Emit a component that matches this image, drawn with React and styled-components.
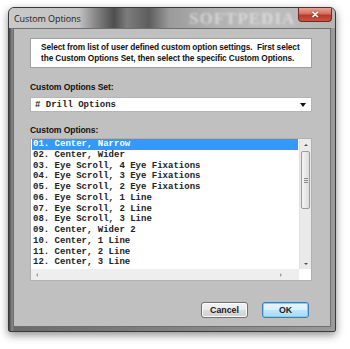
import styled, { createGlobalStyle } from 'styled-components';

const GlobalStyle = createGlobalStyle`
  html, body {
    margin: 0;
    padding: 0;
    background: #ffffff;
  }
  body {
    font-family: "Liberation Sans", Arial, sans-serif;
  }
`;

const options = [
  '01. Center, Narrow',
  '02. Center, Wider',
  '03. Eye Scroll, 4 Eye Fixations',
  '04. Eye Scroll, 3 Eye Fixations',
  '05. Eye Scroll, 2 Eye Fixations',
  '06. Eye Scroll, 1 Line',
  '07. Eye Scroll, 2 Line',
  '08. Eye Scroll, 3 Line',
  '09. Center, Wider 2',
  '10. Center, 1 Line',
  '11. Center, 2 Line',
  '12. Center, 3 Line',
];

const Page = styled.div`
  padding: 7px 0 0 8px;
  height: 349px;
  box-sizing: border-box;
`;

const Window = styled.div`
  width: 328px;
  height: 325px;
  box-sizing: border-box;
  display: flex;
  flex-direction: column;
  border: 1px solid #3a3a3a;
  border-radius: 6px 6px 2px 2px;
  background: linear-gradient(90deg, #3f3f3f 0px, #8a8a8a 3px, #6a6a6a 5px, #9a9a9a 100%);
  box-shadow: 0 3px 9px rgba(0, 0, 0, 0.45);
  overflow: hidden;
`;

const TitleBar = styled.div`
  position: relative;
  height: 20px;
  display: flex;
  align-items: center;
  padding-left: 5px;
  background: linear-gradient(90deg,
    #c9c9c9 0px, #c2c2c2 70px, #8c8c8c 85px, #4e4e4e 105px, #7d7d7d 118px,
    #5d5d5d 140px, #9a9a9a 160px, #b0b0b0 200px, #bdbdbd 260px, #b5b5b5 328px);
`;

const Title = styled.span`
  font-family: "Open Sans", "Noto Sans", sans-serif;
  font-size: 9px;
  color: #1a1a1a;
  letter-spacing: -0.1px;
`;

const Watermark = styled.span`
  position: absolute;
  left: 180px;
  top: 1px;
  font-family: "Liberation Serif", serif;
  font-weight: bold;
  font-size: 17px;
  letter-spacing: 1px;
  color: rgba(230, 230, 230, 0.7);
  filter: blur(0.8px);
`;

const CloseButton = styled.div`
  position: absolute;
  right: 3px;
  top: 0;
  width: 32px;
  height: 13px;
  border: 1px solid #6b2a22;
  border-top: none;
  border-radius: 0 0 4px 4px;
  background: linear-gradient(180deg, #e9a497 0%, #d4705f 45%, #b8392a 55%, #c9543f 100%);
  display: flex;
  align-items: center;
  justify-content: center;
  color: #ffffff;
  font-size: 10px;
  font-weight: bold;
  text-shadow: 0 0 2px #5a1a12;
`;

const Client = styled.div`
  flex: 1;
  margin: 0 4px 4px 4px;
  border: 1px solid #6f6f6f;
  background: #c0c0c0;
  display: flex;
  flex-direction: column;
  padding: 9px 18px 0 16px;
`;

const InfoBox = styled.div`
  background: #ffffff;
  border: 1px solid #a0a0a0;
  height: 30px;
  box-sizing: border-box;
  padding: 3px 0 0 10px;
  font-weight: bold;
  font-size: 8.3px;
  line-height: 11px;
  color: #111111;
  letter-spacing: -0.1px;
`;

const Label = styled.div`
  font-weight: bold;
  font-size: 8.6px;
  color: #111111;
  margin-top: ${({ $top }) => $top}px;
  line-height: 10px;
  letter-spacing: -0.1px;
`;

const SelectBox = styled.div`
  margin-top: 5px;
  height: 15px;
  background: #ffffff;
  border: 1px solid #b5b5b5;
  box-sizing: border-box;
  display: flex;
  align-items: center;
  justify-content: space-between;
  padding: 0 5px 0 4px;
`;

const Mono = styled.span`
  font-family: "Liberation Mono", "Courier New", monospace;
  font-weight: bold;
  font-size: 9px;
  white-space: pre;
  color: #222222;
`;

const Caret = styled.span`
  width: 0;
  height: 0;
  border-left: 3px solid transparent;
  border-right: 3px solid transparent;
  border-top: 4px solid #111111;
`;

const ListBox = styled.div`
  margin-top: 3px;
  height: 143px;
  box-sizing: border-box;
  border: 1px solid #b0b0b0;
  background: #ffffff;
  display: flex;
  flex-direction: column;
`;

const ListMain = styled.div`
  flex: 1;
  display: flex;
  min-height: 0;
`;

const Items = styled.div`
  flex: 1;
  padding: 0 1px;
  overflow: hidden;
`;

const Item = styled.div`
  height: 10.75px;
  line-height: 10.75px;
  padding-left: 1px;
  font-family: "Liberation Mono", "Courier New", monospace;
  font-weight: bold;
  font-size: 9px;
  white-space: pre;
  color: ${({ $selected }) => ($selected ? '#ffffff' : '#222222')};
  background: ${({ $selected }) => ($selected ? '#3399ff' : 'transparent')};
`;

const VScroll = styled.div`
  width: 11px;
  background: #eaeaea;
  border-left: 1px solid #e0e0e0;
  display: flex;
  flex-direction: column;
  align-items: center;
`;

const ArrowCell = styled.div`
  height: 11px;
  width: 100%;
  display: flex;
  align-items: center;
  justify-content: center;
`;

const Arrow = styled.span`
  width: 0;
  height: 0;
  border-left: 2px solid transparent;
  border-right: 2px solid transparent;
  ${({ $dir }) => ($dir === 'up' ? 'border-bottom: 2px solid #505050;' : 'border-top: 2px solid #505050;')}
`;

const HArrow = styled.span`
  width: 0;
  height: 0;
  border-top: 2px solid transparent;
  border-bottom: 2px solid transparent;
  ${({ $dir }) => ($dir === 'left' ? 'border-right: 2px solid #a0a0a0;' : 'border-left: 2px solid #a0a0a0;')}
`;

const Thumb = styled.div`
  margin-top: 1px;
  width: 9px;
  height: 58px;
  box-sizing: border-box;
  border: 1px solid #9a9a9a;
  border-radius: 2px;
  background: linear-gradient(90deg, #f4f4f4, #dcdcdc);
  display: flex;
  align-items: center;
  justify-content: center;
`;

const Grip = styled.div`
  width: 4px;
  height: 5px;
  background: repeating-linear-gradient(180deg, #8a8a8a 0 1px, transparent 1px 2px);
`;

const Spacer = styled.div`
  flex: 1;
`;

const HScroll = styled.div`
  height: 11px;
  display: flex;
  align-items: center;
  background: #eeeeee;
  padding: 0 17px 0 5px;
  justify-content: space-between;
  margin-right: 12px;
`;

const ButtonRow = styled.div`
  margin-top: 21px;
  display: flex;
  justify-content: flex-end;
  gap: 14px;
  padding-right: 3px;
`;

const Button = styled.div`
  width: 47px;
  height: 16px;
  box-sizing: border-box;
  border-radius: 3px;
  border: 1px solid ${({ $primary }) => ($primary ? '#3c7fb1' : '#707070')};
  background: ${({ $primary }) =>
    $primary
      ? 'linear-gradient(180deg, #eaf6fd 0%, #d9f0fc 50%, #bee6fd 51%, #a7d9f5 100%)'
      : 'linear-gradient(180deg, #f2f2f2 0%, #ebebeb 50%, #dddddd 51%, #cfcfcf 100%)'};
  box-shadow: ${({ $primary }) => ($primary ? 'inset 0 0 0 1px #7fd0f5' : 'inset 0 0 0 1px #fcfcfc')};
  display: flex;
  align-items: center;
  justify-content: center;
  font-weight: bold;
  font-size: 8.8px;
  color: #1a1a1a;
`;

export default function App() {
  return (
    <>
      <GlobalStyle />
      <Page>
        <Window>
          <TitleBar>
            <Title>Custom Options</Title>
            <Watermark>SOFTPEDIA</Watermark>
            <CloseButton>✕</CloseButton>
          </TitleBar>
          <Client>
            <InfoBox>
              Select from list of user defined custom option settings.&nbsp; First select
              <br />
              the Custom Options Set, then select the specific Custom Options.
            </InfoBox>
            <Label $top={14}>Custom Options Set:</Label>
            <SelectBox>
              <Mono># Drill Options</Mono>
              <Caret />
            </SelectBox>
            <Label $top={13}>Custom Options:</Label>
            <ListBox>
              <ListMain>
                <Items>
                  {options.map((o, i) => (
                    <Item key={o} $selected={i === 0}>{o}</Item>
                  ))}
                </Items>
                <VScroll>
                  <ArrowCell><Arrow $dir="up" /></ArrowCell>
                  <Thumb><Grip /></Thumb>
                  <Spacer />
                  <ArrowCell><Arrow $dir="down" /></ArrowCell>
                </VScroll>
              </ListMain>
              <HScroll>
                <HArrow $dir="left" />
                <HArrow $dir="right" />
              </HScroll>
            </ListBox>
            <ButtonRow>
              <Button>Cancel</Button>
              <Button $primary>OK</Button>
            </ButtonRow>
          </Client>
        </Window>
      </Page>
    </>
  );
}
